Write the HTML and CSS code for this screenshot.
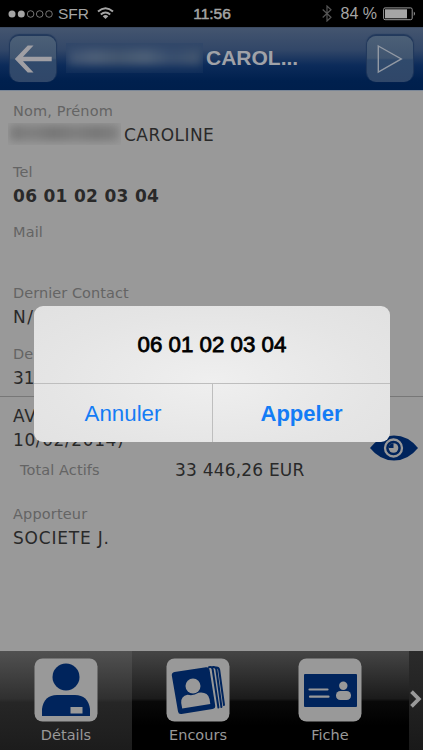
FILE: index.html
```html
<!DOCTYPE html>
<html lang="fr">
<head>
<meta charset="UTF-8">
<meta name="viewport" content="width=device-width, initial-scale=1.0">
<title>Fiche contact</title>
<link rel="stylesheet" href="styles.css">
</head>
<body>

<div class="screen">
    <div class="status">
        <div class="status-left">
            <svg width="46" height="10" viewBox="0 0 46 10" fill="none" stroke="#a5a5a5">
                <circle cx="4" cy="5" r="3.5" fill="#a5a5a5" stroke="none"/>
                <circle cx="13.3" cy="5" r="3.5" fill="#a5a5a5" stroke="none"/>
                <circle cx="22.6" cy="5" r="3.3" stroke-width=".7"/>
                <circle cx="31.7" cy="5" r="3.3" stroke-width=".7"/>
                <circle cx="41" cy="5" r="3.3" stroke-width=".7"/>
            </svg>
            <span class="operator">SFR</span>
            <svg width="17" height="13" viewBox="0 0 17 13" fill="none" stroke="#a5a5a5" stroke-width="2">
                <path d="M1 4.6Q8.5-2 16 4.6"/>
                <path d="M3.8 7.6Q8.5 3.4 13.2 7.6"/>
                <path d="M8.5 12L5.7 9.2Q8.5 7 11.3 9.2Z" fill="#a5a5a5" stroke="none"/>
            </svg>
        </div>
        <span class="clock">11:56</span>
        <div class="status-right">
            <svg width="10" height="17" viewBox="0 0 10 17" fill="none" stroke="#555" stroke-width="1.2">
                <path d="M.7 4.5L9 12.2L5 16V1L9 4.8L.7 12.5"/>
            </svg>
            <span class="percent">84 %</span>
            <svg width="33" height="14" viewBox="0 0 33 14">
                <rect x=".6" y=".9" width="28.6" height="11.8" rx="1.5" fill="none" stroke="#999"/>
                <rect x="2" y="2.3" width="22" height="9" fill="#a5a5a5"/>
                <path d="M30.8 4.6Q33 6.8 30.8 9Z" fill="#a5a5a5"/>
            </svg>
        </div>
    </div>

    <header>
        <div class="button">
            <svg width="46" height="46" viewBox="0 0 46 46" fill="#a09fa4">
                <path d="M4.8 23L17.7 9.5H23.5L13 20.8H41.7V25.2H13L23.5 36.5H17.7Z"/>
            </svg>
        </div>
        <div class="title">
            <div class="masked masked-title"><i></i></div>
            <h1>CAROL...</h1>
        </div>
        <div class="button">
            <svg width="46" height="46" viewBox="0 0 46 46" fill="none" stroke="#9299a4" stroke-width="1.4">
                <path d="M11.3 10L34.3 22.9L11.3 36Z"/>
            </svg>
        </div>
    </header>

    <main>
        <div class="field">
            <div class="label">Nom, Prénom</div>
            <div class="value name"><div class="masked masked-name"><i></i></div><span class="first-name">CAROLINE</span></div>
        </div>
        <div class="field">
            <div class="label">Tel</div>
            <div class="value phone">06 01 02 03 04</div>
        </div>
        <div class="field">
            <div class="label">Mail</div>
            <div class="value"></div>
        </div>
        <div class="field">
            <div class="label contact">Dernier Contact</div>
            <div class="value last-contact">N/A</div>
        </div>
        <div class="field field-last">
            <div class="label">De</div>
            <div class="value">31</div>
        </div>
        <div class="contract">
            <div class="contract-name">AV<br>10/02/2014)</div>
            <svg class="eye" width="48" height="26" viewBox="0 0 48 26">
                <path d="M0 13Q10 .5 24 .5T48 13Q38 25.5 24 25.5T0 13Z" fill="#00245c"/>
                <circle cx="23.5" cy="13" r="8.5" fill="none" stroke="#999" stroke-width="2.3"/>
                <circle cx="23.5" cy="13" r="4.8" fill="#999"/>
                <path d="M23.5 8.2V13H18.7A4.8 4.8 0 0 1 23.5 8.2Z" fill="#00245c"/>
            </svg>
            <div class="total">
                <span class="label actifs">Total Actifs</span>
                <span class="value amount">33 446,26 EUR</span>
            </div>
            <div class="label">Apporteur</div>
            <div class="value societe">SOCIETE J.</div>
        </div>
    </main>

    <nav>
        <div class="tab active">
            <svg width="64" height="64" viewBox="0 0 64 64">
                <rect x=".5" y=".5" width="63" height="63" rx="8" fill="#999"/>
                <g fill="#00245c">
                    <circle cx="32" cy="19" r="13.5"/>
                    <path d="M8 58V51Q10 37 23 37H41Q54 37 56 51V58Z"/>
                </g>
                <rect x="36.5" y="49" width="12" height="6.5" fill="#999"/>
            </svg>
            <span>Détails</span>
        </div>
        <div class="tab">
            <svg width="64" height="64" viewBox="0 0 64 64">
                <rect x=".5" y=".5" width="63" height="63" rx="8" fill="#999"/>
                <g fill="none" stroke="#00245c" stroke-width="2" stroke-linecap="round">
                    <path d="M43 9.2Q46 8.4 46.6 11L52.4 49.5"/>
                    <path d="M47 9Q49.8 8.6 50.4 11.5L55.4 49"/>
                    <path d="M50.5 9.5Q52.6 9.5 53.2 12L58 47"/>
                </g>
                <path d="M8.5 14L40 9.2Q43 8.8 43.6 12L49.2 47.5Q49.6 50.5 46.5 51L15.5 56Q12.5 56.4 12 53.4L5.8 17.5Q5.5 14.5 8.5 14Z" fill="#00245c"/>
                <circle cx="27" cy="28" r="7.5" fill="#999"/>
                <path d="M16.2 50.5L15.2 45Q14.8 38 21.5 36.8Q27.5 38.2 32.5 34.8Q41.5 33.5 43.5 41L44.3 46Z" fill="#999"/>
            </svg>
            <span>Encours</span>
        </div>
        <div class="tab">
            <svg width="64" height="64" viewBox="0 0 64 64">
                <rect x=".5" y=".5" width="63" height="63" rx="8" fill="#999"/>
                <rect x="6" y="16" width="53" height="33" rx="1" fill="#00245c"/>
                <path d="M11.5 31.5H29.5M12 38.7H30.5" stroke="#999" stroke-width="2.2" stroke-linecap="round"/>
                <circle cx="45.3" cy="27.8" r="4.2" fill="#999"/>
                <rect x="38" y="33" width="15" height="9" rx="4.3" fill="#999"/>
            </svg>
            <span>Fiche</span>
        </div>
        <div class="more">
            <svg width="14" height="18" viewBox="0 0 14 18" fill="none" stroke="#999" stroke-width="3.8">
                <path d="M2.5 1.7L9.8 9L2.5 16.3"/>
            </svg>
        </div>
    </nav>

    <!-- Confirmation de l'appel -->
    <div class="alert">
        <div class="alert-title">06 01 02 03 04</div>
        <div class="alert-buttons">
            <div class="cancel"><span>Annuler</span></div>
            <div class="call"><span>Appeler</span></div>
        </div>
    </div>
</div>

</body>
</html>
```

FILE: styles.css
```css
* {
    box-sizing: border-box;
}

body {
    margin: 0;
    background-color: #000;
    font-family: "DejaVu Sans", Verdana, sans-serif;
}

svg {
    display: block;
    flex-shrink: 0;
}

.screen {
    position: relative;
    width: 423px;
    height: 750px;
    overflow: hidden;
    display: flex;
    flex-direction: column;
}

.status {
    height: 27px;
    display: grid;
    grid-template-columns: 1fr auto 1fr;
    align-items: center;
    padding: 0 7px 0 8px;
    color: #a5a5a5;
    font: 15px/27px "Liberation Sans", Arial, sans-serif;
}

.status-left,
.status-right {
    display: flex;
    align-items: center;
}

.status-right {
    justify-content: flex-end;
}

.operator {
    margin: 0 8px 0 4px;
    font-size: 15.5px;
}

.clock {
    font-size: 15.5px;
    -webkit-text-stroke: 0.5px #a5a5a5;
}

.percent {
    margin: 0 6px 0 9px;
    font-size: 16px;
}

header {
    height: 64px;
    display: flex;
    justify-content: space-between;
    padding: 8px 10px 0;
    border-top: 1px solid #3c4a60;
    border-bottom: 1px solid #7b8797;
    background: linear-gradient(#44556f, #324768 35%, #0c2b5a 60%, #00204e 85%, #001f4c);
}

.button {
    width: 46px;
    height: 46px;
    border-radius: 9px;
    background: linear-gradient(#4c6077, #405570 48%, #304a6c 52%, #304769);
    box-shadow: 0 -1px 1px 1px #22395c;
}

.title {
    display: flex;
    flex: 1;
    padding: 7px 0 0 10px;
}

.title h1 {
    margin: 0 0 0 3px;
    color: #a0a2a8;
    font: bold 21px/29px "Liberation Sans", Arial, sans-serif;
}

.masked {
    overflow: hidden;
    flex-shrink: 0;
}

.masked i {
    display: block;
    filter: blur(4px);
}

.masked-title {
    width: 137px;
    height: 30px;
    padding: 6px 2px;
    background-color: rgba(35, 62, 103, 0.3);
}

.masked-title i {
    height: 16px;
    background: linear-gradient(90deg, #3d5170, #4d5e77 20%, #43566f 38%, #4d5f77 58%, #384d6d 78%, #43566f);
}

main {
    height: 560px;
    padding: 11px 0 0;
    background-color: #999;
    color: #292929;
}

.field {
    height: 60.7px;
    padding-left: 13px;
}

.field-last {
    height: 51.2px;
}

.label {
    color: #646464;
    font-size: 14.5px;
    line-height: 18px;
    letter-spacing: 0.15px;
}

.contact {
    letter-spacing: 0.05px;
}

.value {
    font-size: 17px;
    line-height: 24px;
    padding-top: 3px;
}

.name {
    display: flex;
    margin-left: -5px;
}

.masked-name {
    width: 113px;
    height: 22px;
    padding: 2px 2px;
}

.masked-name i {
    height: 16px;
    background: linear-gradient(90deg, #777, #808080 20%, #767676 40%, #7e7e7e 60%, #777 80%, #808080);
}

.first-name {
    margin-left: 3px;
    letter-spacing: 0.45px;
}

.last-contact {
    letter-spacing: 1.5px;
}

.phone {
    font-weight: bold;
    letter-spacing: 0.3px;
}

.contract {
    position: relative;
    padding: 7px 13px 0;
    border-top: 1px solid #777;
}

.contract-name {
    font-size: 17px;
    line-height: 24px;
    letter-spacing: 0.6px;
}

.eye {
    position: absolute;
    top: 38px;
    left: 370px;
}

.total {
    display: flex;
    align-items: center;
    height: 26px;
    padding-left: 7px;
    margin: 5px 0 22px;
}

.actifs {
    width: 155px;
    letter-spacing: 0.1px;
}

.amount {
    padding: 0;
    letter-spacing: 0.2px;
}

.societe {
    letter-spacing: 0.8px;
}

nav {
    height: 99px;
    display: flex;
    background: linear-gradient(#454545, #1b1b1b 48%, #090909 51%, #000 75%);
}

.tab {
    width: 132px;
    display: flex;
    flex-direction: column;
    align-items: center;
    padding-top: 7px;
    color: #999;
    font-size: 14.5px;
}

.tab span {
    line-height: 18px;
    margin-top: 4px;
}

.active {
    background: linear-gradient(#515151, #303030 48%, #262626 52%, #1c1c1c);
}

.more {
    width: 14px;
    margin-left: auto;
    padding-top: 39px;
    background: linear-gradient(#2b2b2b, #191919);
}

.alert {
    position: absolute;
    top: 306px;
    left: 34px;
    width: 356px;
    height: 136px;
    border-radius: 9px;
    overflow: hidden;
    background: radial-gradient(ellipse at 50% 55%, #efefef, #e5e5e5 65%, #e1e1e1);
    font-family: "Liberation Sans", Arial, sans-serif;
}

.alert-title {
    height: 77px;
    color: #000;
    font-size: 22.3px;
    line-height: 77px;
    text-align: center;
    -webkit-text-stroke: 0.8px #000;
}

.alert-buttons {
    height: 59px;
    display: flex;
    border-top: 1px solid #bebebe;
    color: #147cf5;
    font-size: 22.3px;
    line-height: 59px;
    text-align: center;
}

.cancel {
    width: 179px;
    border-right: 1px solid #bebebe;
}

.call {
    flex: 1;
    font-size: 22px;
    font-weight: bold;
}
```
